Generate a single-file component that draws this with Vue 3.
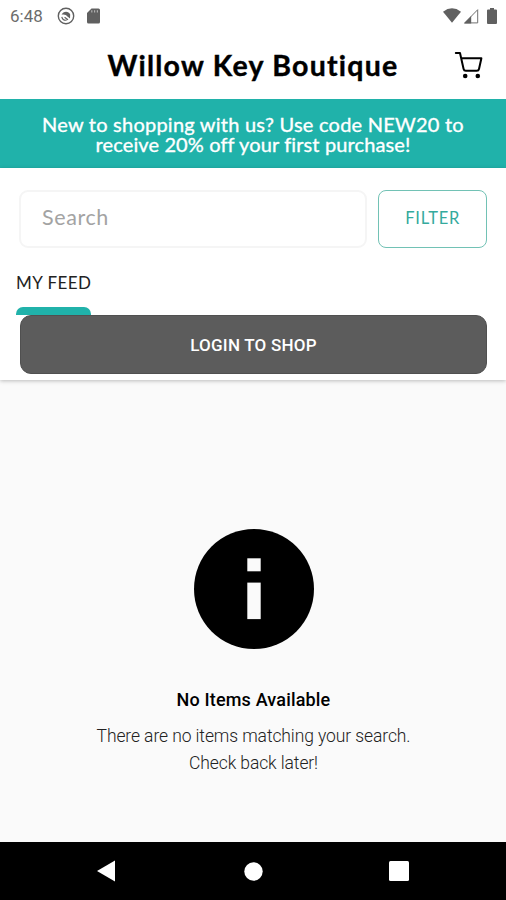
<script setup>
import { ref } from 'vue'

const search = ref('')
</script>

<template>
  <div class="screen">
    <div class="status">
      <span class="clock">6:48</span>
      <!-- notification ring -->
      <svg class="ring" width="18" height="18" viewBox="0 0 18 18" fill="none" stroke="#606060">
        <circle cx="9" cy="9" r="7.7" stroke-width="1.4" />
        <path d="M4.6 7.8 C6 4 11.6 3.8 13.2 7.4 L13 11.6 L10.4 9.6 C9.4 7.8 7 7.2 4.6 7.8 Z" fill="#606060" stroke="none" />
        <path d="M4.8 9.8 C5.4 12.2 7.2 13.5 9.6 13.2 M7.6 10.2 L11 12.8" stroke-width="1.2" />
      </svg>
      <svg class="sd" width="13" height="16" viewBox="0 0 13 16">
        <path d="M4.5 0.5 H11.5 Q13 0.5 13 2 V14 Q13 15.5 11.5 15.5 H1.5 Q0 15.5 0 14 V5 Z" fill="#606060" />
        <path d="M4.8 2.2 V4.6 M7.6 2.2 V4.6 M10.4 2.2 V4.6" stroke="#b0b0b0" stroke-width="1.2" />
      </svg>
      <svg class="wifi" width="18" height="15" viewBox="0 0 18 15">
        <path d="M0 3.7 Q9 -3.2 18 3.7 L9 14.8 Z" fill="#606060" />
      </svg>
      <svg class="signal" width="16" height="16" viewBox="0 0 16 16">
        <path d="M1.8 14.9 L14.7 1.7 V14.9 Z" fill="none" stroke="#707070" stroke-width="1" />
        <path d="M0.8 15.4 L8.2 8 V15.4 Z" fill="#606060" />
      </svg>
      <svg class="battery" width="10" height="16" viewBox="0 0 10 16">
        <path d="M3 0 H7 V1.5 H9 Q10 1.5 10 2.5 V15 Q10 16 9 16 H1 Q0 16 0 15 V2.5 Q0 1.5 1 1.5 H3 Z" fill="#606060" />
      </svg>
    </div>

    <header class="header">
      <h1 class="title">Willow Key Boutique</h1>
      <svg class="cart" width="29" height="29" viewBox="0 0 29 29" fill="none" stroke="#000" stroke-width="2" stroke-linecap="round" stroke-linejoin="round">
        <path d="M1.8 2 H6 L9.6 18 Q10 19.8 11.8 19.8 H22.8 Q24.6 19.8 25 18 L27.4 7.2 H7.4" />
        <circle cx="11.2" cy="25" r="2.3" fill="#000" stroke="none" />
        <circle cx="23.8" cy="25" r="2.3" fill="#000" stroke="none" />
      </svg>
    </header>

    <div class="banner">
      <span class="line one">New to shopping with us? Use code NEW20 to</span>
      <span class="line two">receive 20% off your first purchase!</span>
    </div>

    <section class="controls">
      <div class="search-row">
        <input v-model="search" class="search" type="text" placeholder="Search" />
        <button class="filter">FILTER</button>
      </div>
      <div class="tab"><span class="tab-label">MY FEED</span></div>
      <button class="login">LOGIN TO SHOP</button>
    </section>

    <main class="empty">
      <svg class="info" width="120" height="120" viewBox="0 0 120 120">
        <circle cx="60" cy="60" r="60" fill="#000" />
        <rect x="53.3" y="29.3" width="13.4" height="13" fill="#fafafa" />
        <rect x="53.3" y="53.6" width="13.4" height="36.5" fill="#fafafa" />
      </svg>
      <h2 class="empty-title">No Items Available</h2>
      <p class="empty-text">There are no items matching your search.<br />Check back later!</p>
    </main>

    <nav class="nav">
      <svg width="18" height="22" viewBox="0 0 18 22"><path d="M0 11 L18 0.5 V21.5 Z" fill="#fff" /></svg>
      <svg class="home" width="19" height="19" viewBox="0 0 19 19"><circle cx="9.5" cy="9.5" r="9.2" fill="#fff" /></svg>
      <svg width="20" height="20" viewBox="0 0 20 20"><rect width="20" height="20" rx="1.5" fill="#fff" /></svg>
    </nav>
  </div>
</template>

<style>
body {
  margin: 0;
}
</style>

<style scoped>
.screen {
  width: 506px;
  height: 900px;
  display: flex;
  flex-direction: column;
  overflow: hidden;
  background: #fafafa;
  font-family: Lato, sans-serif;
  color: #000;
}
.screen * {
  box-sizing: border-box;
}
.status {
  height: 32px;
  flex: none;
  display: flex;
  align-items: center;
  padding: 0 9px 1px 10px;
  background: #fff;
}
.clock {
  width: 47px;
  font: 17px/20px Roboto, sans-serif;
  color: #6c6c6c;
}
.sd {
  margin-left: 12px;
}
.wifi {
  margin-left: auto;
}
.signal {
  margin-left: 2px;
}
.battery {
  margin-left: 8px;
}
.header {
  height: 66.5px;
  flex: none;
  display: grid;
  grid-template-columns: 1fr 300px 1fr;
  align-items: center;
  background: #fff;
}
.title {
  grid-column: 2;
  margin: 0;
  font-size: 28.5px;
  font-weight: 700;
  line-height: 34px;
  letter-spacing: 1.25px;
  text-align: center;
  white-space: nowrap;
  -webkit-text-stroke: 0.4px #000;
}
.cart {
  justify-self: end;
  margin-right: 23px;
}
.banner {
  height: 69.5px;
  flex: none;
  display: flex;
  flex-direction: column;
  align-items: center;
  padding-top: 15.5px;
  background: #20b2aa;
  color: #fff;
}
.line {
  font-size: 20px;
  line-height: 20px;
  white-space: nowrap;
  -webkit-text-stroke: 0.35px #fff;
}
.one {
  letter-spacing: 0.23px;
}
.two {
  letter-spacing: 0.12px;
}
.controls {
  position: relative;
  height: 212px;
  flex: none;
  padding: 22px 19px 0;
  background: #fff;
  box-shadow: 0 1px 4px rgba(0, 0, 0, 0.25);
}
.search-row {
  display: flex;
  gap: 11px;
}
.search {
  width: 349px;
  height: 58px;
  padding: 0 21px 4px;
  border: 2px solid #f5f5f5;
  border-radius: 9px;
  background: #fff;
  outline: none;
  font: 21.5px Lato, sans-serif;
  letter-spacing: 0.6px;
}
.search::placeholder {
  color: #a3a3a3;
  opacity: 1;
}
.filter {
  width: 109px;
  height: 58px;
  padding: 0 0 2px;
  border: 1px solid #72c2b5;
  border-radius: 8px;
  background: #fff;
  color: #35aa9d;
  font: 16.5px Lato, sans-serif;
  letter-spacing: 0.7px;
}
.tab {
  width: 75px;
  height: 67px;
  margin-left: -3px;
  display: flex;
  flex-direction: column;
  padding-top: 25px;
}
.tab::after {
  content: '';
  height: 8px;
  margin-top: auto;
  border-radius: 7px 7px 0 0;
  background: #20b2aa;
}
.tab-label {
  font-size: 17px;
  line-height: 20px;
  letter-spacing: 0.45px;
  white-space: nowrap;
  color: #222;
}
.login {
  display: block;
  width: 467px;
  height: 58.5px;
  margin-left: 1px;
  padding: 1px 0 0;
  border: 1px solid #505050;
  border-radius: 11px;
  background: #5c5c5c;
  color: #fff;
  font: 500 17px Roboto, sans-serif;
  letter-spacing: 0.22px;
}
.empty {
  flex: 1;
  display: flex;
  flex-direction: column;
  align-items: center;
  padding: 149px 0 0 1px;
  font-family: Roboto, sans-serif;
}
.info {
  flex: none;
}
.empty-title {
  margin: 39px 0 0;
  font-size: 18px;
  font-weight: 500;
  line-height: 24px;
  letter-spacing: 0.17px;
}
.empty-text {
  margin: 11px 0 0;
  font-size: 17.5px;
  font-weight: 300;
  line-height: 27px;
  letter-spacing: -0.1px;
  text-align: center;
  color: #222;
}
.nav {
  height: 58px;
  flex: none;
  display: flex;
  align-items: center;
  justify-content: space-between;
  padding: 0 97px;
  background: #000;
}
.home {
  margin-left: 2px;
}
</style>
